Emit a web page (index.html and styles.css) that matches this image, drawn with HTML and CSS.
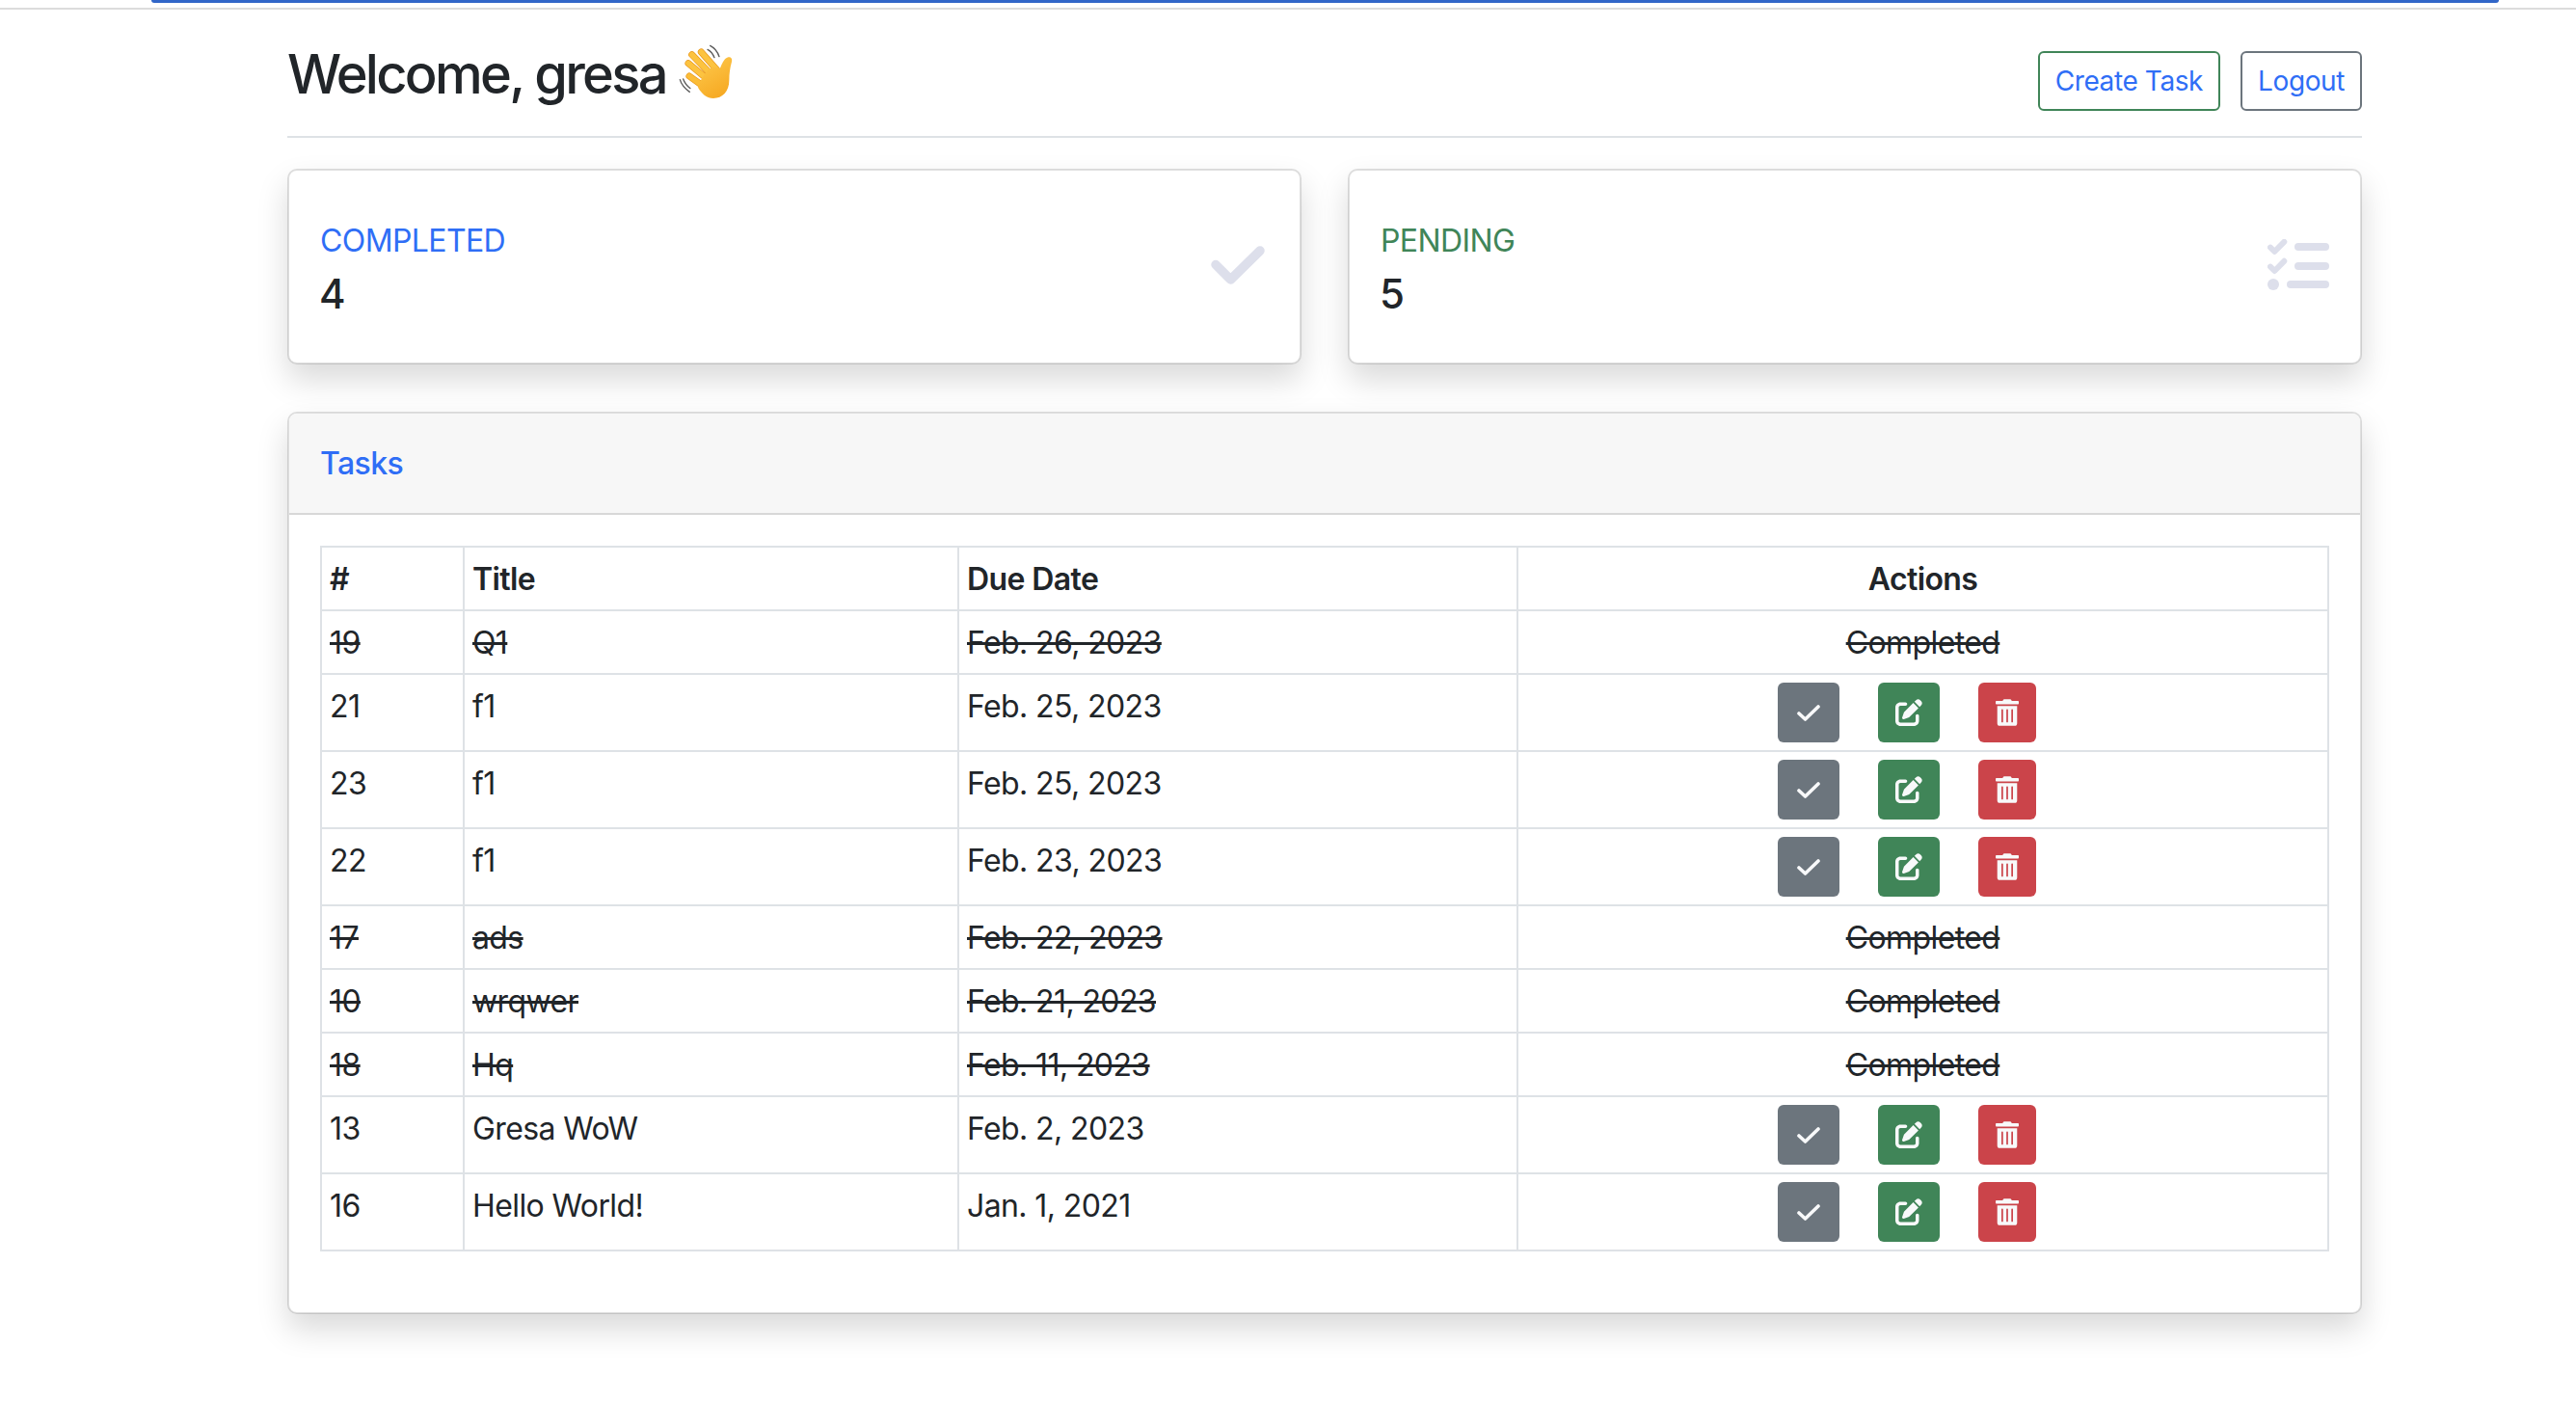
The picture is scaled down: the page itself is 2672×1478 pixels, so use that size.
FILE: index.html
```html
<!DOCTYPE html>
<html lang="en">
<head>
<meta charset="utf-8">
<title>Tasks</title>
<link rel="stylesheet" href="styles.css">
</head>
<body>
<div class="strip"><div class="strip-bar"></div></div>
<div class="page">
  <header class="top">
    <h1 class="welcome">Welcome, gresa
      <svg class="wave" viewBox="0 0 225 210" aria-hidden="true">
        <defs>
          <linearGradient id="hand" x1="0.2" y1="0" x2="0.7" y2="1">
            <stop offset="0" stop-color="#fdc84b"/>
            <stop offset="1" stop-color="#f6a821"/>
          </linearGradient>
        </defs>
        <g fill="none" stroke="#5a5a5a" stroke-width="4" stroke-linecap="round">
          <path d="M122 22c12 6 22 16 28 34"/>
          <path d="M114 34c9 5 16 12 21 25"/>
          <path d="M28 128c4 14 13 26 30 38"/>
          <path d="M38 126c4 11 10 20 22 29"/>
        </g>
        <g fill="none" stroke-linecap="round">
          <path d="M65 50L125 112" stroke="#e8961a" stroke-width="21"/>
          <path d="M65 50L125 112" stroke="#fcc340" stroke-width="17"/>
          <path d="M94 42L145 100" stroke="#e8961a" stroke-width="21"/>
          <path d="M94 42L145 100" stroke="#fcc340" stroke-width="17"/>
          <path d="M54 77L115 128" stroke="#e8961a" stroke-width="21"/>
          <path d="M54 77L115 128" stroke="#fcc340" stroke-width="17"/>
          <path d="M57 117L110 155" stroke="#e8961a" stroke-width="21"/>
          <path d="M57 117L110 155" stroke="#fbbd38" stroke-width="17"/>
        </g>
        <path fill="url(#hand)" d="M118 95C135 82 147 92 152 94C158 82 164 62 178 58C188 56 191 64 189 72C184 90 181 108 181 130C181 165 160 186 132 186C112 186 96 172 84 152C92 128 104 108 118 95Z"/>
      </svg>
    </h1>
    <nav class="top-actions">
      <a class="btn btn-create" href="#">Create Task</a>
      <a class="btn btn-logout" href="#">Logout</a>
    </nav>
  </header>

  <section class="stats">
    <article class="card stat">
      <div class="stat-text">
        <div class="stat-label blue">COMPLETED</div>
        <div class="stat-num">4</div>
      </div>
      <svg class="stat-check" viewBox="0 0 56 40" aria-hidden="true"><polyline points="5,19.5 20.5,35 51,5"/></svg>
    </article>
    <article class="card stat">
      <div class="stat-text">
        <div class="stat-label green">PENDING</div>
        <div class="stat-num">5</div>
      </div>
      <svg class="stat-tasks" viewBox="0 0 64 53" aria-hidden="true">
        <polyline points="3,8.7 7.3,13 17.3,2.8"/>
        <polyline points="3,28.7 7.3,33 17.3,22.8"/>
        <circle cx="6" cy="47" r="6"/>
        <line class="bar" x1="32" y1="8" x2="60" y2="8"/>
        <line class="bar" x1="32" y1="28" x2="60" y2="28"/>
        <line class="bar" x1="24" y1="47" x2="60" y2="47"/>
      </svg>
    </article>
  </section>

  <section class="card tasks">
    <div class="tasks-head">Tasks</div>
    <div class="tasks-body">
      <table class="grid">
        <colgroup>
          <col class="c-id"><col class="c-title"><col class="c-date"><col class="c-act">
        </colgroup>
        <thead>
          <tr><th>#</th><th>Title</th><th>Due Date</th><th class="center">Actions</th></tr>
        </thead>
        <tbody>
          <tr class="done"><td>19</td><td>Q1</td><td>Feb. 26, 2023</td><td class="center">Completed</td></tr>
          <tr><td>21</td><td>f1</td><td>Feb. 25, 2023</td><td class="act-cell"><div class="acts">
            <a class="act a-gray" href="#"><svg class="i-check" viewBox="0 0 24 17"><polyline points="2,9 8.5,15 22,2"/></svg></a>
            <a class="act a-green" href="#"><svg class="i-edit" viewBox="0 0 512 512"><path d="M471.6 21.7c-21.9-21.9-57.3-21.9-79.2 0L362.3 51.7l97.9 97.9 30.1-30.1c21.9-21.9 21.9-57.3 0-79.2L471.6 21.7zm-299.2 220c-6.1 6.1-10.8 13.6-13.5 21.9l-29.6 88.8c-2.9 8.6-.6 18.1 5.8 24.6s15.9 8.7 24.6 5.8l88.8-29.6c8.2-2.7 15.7-7.4 21.9-13.5L437.7 172.3 339.7 74.3 172.4 241.7zM96 64C43 64 0 107 0 160V416c0 53 43 96 96 96H352c53 0 96-43 96-96V320c0-17.7-14.3-32-32-32s-32 14.3-32 32v96c0 17.7-14.3 32-32 32H96c-17.7 0-32-14.3-32-32V160c0-17.7 14.3-32 32-32h96c17.7 0 32-14.3 32-32s-14.3-32-32-32H96z"/></svg></a>
            <a class="act a-red" href="#"><svg class="i-trash" viewBox="0 0 448 512"><path d="M32 464a48 48 0 0 0 48 48h288a48 48 0 0 0 48-48V128H32zm272-256a16 16 0 0 1 32 0v224a16 16 0 0 1-32 0zm-96 0a16 16 0 0 1 32 0v224a16 16 0 0 1-32 0zm-96 0a16 16 0 0 1 32 0v224a16 16 0 0 1-32 0zM432 32H312l-9.4-18.7A24 24 0 0 0 281.1 0H166.8a23.72 23.72 0 0 0-21.4 13.3L136 32H16A16 16 0 0 0 0 48v32a16 16 0 0 0 16 16h416a16 16 0 0 0 16-16V48a16 16 0 0 0-16-16z"/></svg></a>
          </div></td></tr>
          <tr><td>23</td><td>f1</td><td>Feb. 25, 2023</td><td class="act-cell"><div class="acts">
            <a class="act a-gray" href="#"><svg class="i-check" viewBox="0 0 24 17"><polyline points="2,9 8.5,15 22,2"/></svg></a>
            <a class="act a-green" href="#"><svg class="i-edit" viewBox="0 0 512 512"><path d="M471.6 21.7c-21.9-21.9-57.3-21.9-79.2 0L362.3 51.7l97.9 97.9 30.1-30.1c21.9-21.9 21.9-57.3 0-79.2L471.6 21.7zm-299.2 220c-6.1 6.1-10.8 13.6-13.5 21.9l-29.6 88.8c-2.9 8.6-.6 18.1 5.8 24.6s15.9 8.7 24.6 5.8l88.8-29.6c8.2-2.7 15.7-7.4 21.9-13.5L437.7 172.3 339.7 74.3 172.4 241.7zM96 64C43 64 0 107 0 160V416c0 53 43 96 96 96H352c53 0 96-43 96-96V320c0-17.7-14.3-32-32-32s-32 14.3-32 32v96c0 17.7-14.3 32-32 32H96c-17.7 0-32-14.3-32-32V160c0-17.7 14.3-32 32-32h96c17.7 0 32-14.3 32-32s-14.3-32-32-32H96z"/></svg></a>
            <a class="act a-red" href="#"><svg class="i-trash" viewBox="0 0 448 512"><path d="M32 464a48 48 0 0 0 48 48h288a48 48 0 0 0 48-48V128H32zm272-256a16 16 0 0 1 32 0v224a16 16 0 0 1-32 0zm-96 0a16 16 0 0 1 32 0v224a16 16 0 0 1-32 0zm-96 0a16 16 0 0 1 32 0v224a16 16 0 0 1-32 0zM432 32H312l-9.4-18.7A24 24 0 0 0 281.1 0H166.8a23.72 23.72 0 0 0-21.4 13.3L136 32H16A16 16 0 0 0 0 48v32a16 16 0 0 0 16 16h416a16 16 0 0 0 16-16V48a16 16 0 0 0-16-16z"/></svg></a>
          </div></td></tr>
          <tr><td>22</td><td>f1</td><td>Feb. 23, 2023</td><td class="act-cell"><div class="acts">
            <a class="act a-gray" href="#"><svg class="i-check" viewBox="0 0 24 17"><polyline points="2,9 8.5,15 22,2"/></svg></a>
            <a class="act a-green" href="#"><svg class="i-edit" viewBox="0 0 512 512"><path d="M471.6 21.7c-21.9-21.9-57.3-21.9-79.2 0L362.3 51.7l97.9 97.9 30.1-30.1c21.9-21.9 21.9-57.3 0-79.2L471.6 21.7zm-299.2 220c-6.1 6.1-10.8 13.6-13.5 21.9l-29.6 88.8c-2.9 8.6-.6 18.1 5.8 24.6s15.9 8.7 24.6 5.8l88.8-29.6c8.2-2.7 15.7-7.4 21.9-13.5L437.7 172.3 339.7 74.3 172.4 241.7zM96 64C43 64 0 107 0 160V416c0 53 43 96 96 96H352c53 0 96-43 96-96V320c0-17.7-14.3-32-32-32s-32 14.3-32 32v96c0 17.7-14.3 32-32 32H96c-17.7 0-32-14.3-32-32V160c0-17.7 14.3-32 32-32h96c17.7 0 32-14.3 32-32s-14.3-32-32-32H96z"/></svg></a>
            <a class="act a-red" href="#"><svg class="i-trash" viewBox="0 0 448 512"><path d="M32 464a48 48 0 0 0 48 48h288a48 48 0 0 0 48-48V128H32zm272-256a16 16 0 0 1 32 0v224a16 16 0 0 1-32 0zm-96 0a16 16 0 0 1 32 0v224a16 16 0 0 1-32 0zm-96 0a16 16 0 0 1 32 0v224a16 16 0 0 1-32 0zM432 32H312l-9.4-18.7A24 24 0 0 0 281.1 0H166.8a23.72 23.72 0 0 0-21.4 13.3L136 32H16A16 16 0 0 0 0 48v32a16 16 0 0 0 16 16h416a16 16 0 0 0 16-16V48a16 16 0 0 0-16-16z"/></svg></a>
          </div></td></tr>
          <tr class="done"><td>17</td><td>ads</td><td>Feb. 22, 2023</td><td class="center">Completed</td></tr>
          <tr class="done"><td>10</td><td>wrqwer</td><td>Feb. 21, 2023</td><td class="center">Completed</td></tr>
          <tr class="done"><td>18</td><td>Hq</td><td>Feb. 11, 2023</td><td class="center">Completed</td></tr>
          <tr><td>13</td><td>Gresa WoW</td><td>Feb. 2, 2023</td><td class="act-cell"><div class="acts">
            <a class="act a-gray" href="#"><svg class="i-check" viewBox="0 0 24 17"><polyline points="2,9 8.5,15 22,2"/></svg></a>
            <a class="act a-green" href="#"><svg class="i-edit" viewBox="0 0 512 512"><path d="M471.6 21.7c-21.9-21.9-57.3-21.9-79.2 0L362.3 51.7l97.9 97.9 30.1-30.1c21.9-21.9 21.9-57.3 0-79.2L471.6 21.7zm-299.2 220c-6.1 6.1-10.8 13.6-13.5 21.9l-29.6 88.8c-2.9 8.6-.6 18.1 5.8 24.6s15.9 8.7 24.6 5.8l88.8-29.6c8.2-2.7 15.7-7.4 21.9-13.5L437.7 172.3 339.7 74.3 172.4 241.7zM96 64C43 64 0 107 0 160V416c0 53 43 96 96 96H352c53 0 96-43 96-96V320c0-17.7-14.3-32-32-32s-32 14.3-32 32v96c0 17.7-14.3 32-32 32H96c-17.7 0-32-14.3-32-32V160c0-17.7 14.3-32 32-32h96c17.7 0 32-14.3 32-32s-14.3-32-32-32H96z"/></svg></a>
            <a class="act a-red" href="#"><svg class="i-trash" viewBox="0 0 448 512"><path d="M32 464a48 48 0 0 0 48 48h288a48 48 0 0 0 48-48V128H32zm272-256a16 16 0 0 1 32 0v224a16 16 0 0 1-32 0zm-96 0a16 16 0 0 1 32 0v224a16 16 0 0 1-32 0zm-96 0a16 16 0 0 1 32 0v224a16 16 0 0 1-32 0zM432 32H312l-9.4-18.7A24 24 0 0 0 281.1 0H166.8a23.72 23.72 0 0 0-21.4 13.3L136 32H16A16 16 0 0 0 0 48v32a16 16 0 0 0 16 16h416a16 16 0 0 0 16-16V48a16 16 0 0 0-16-16z"/></svg></a>
          </div></td></tr>
          <tr><td>16</td><td>Hello World!</td><td>Jan. 1, 2021</td><td class="act-cell"><div class="acts">
            <a class="act a-gray" href="#"><svg class="i-check" viewBox="0 0 24 17"><polyline points="2,9 8.5,15 22,2"/></svg></a>
            <a class="act a-green" href="#"><svg class="i-edit" viewBox="0 0 512 512"><path d="M471.6 21.7c-21.9-21.9-57.3-21.9-79.2 0L362.3 51.7l97.9 97.9 30.1-30.1c21.9-21.9 21.9-57.3 0-79.2L471.6 21.7zm-299.2 220c-6.1 6.1-10.8 13.6-13.5 21.9l-29.6 88.8c-2.9 8.6-.6 18.1 5.8 24.6s15.9 8.7 24.6 5.8l88.8-29.6c8.2-2.7 15.7-7.4 21.9-13.5L437.7 172.3 339.7 74.3 172.4 241.7zM96 64C43 64 0 107 0 160V416c0 53 43 96 96 96H352c53 0 96-43 96-96V320c0-17.7-14.3-32-32-32s-32 14.3-32 32v96c0 17.7-14.3 32-32 32H96c-17.7 0-32-14.3-32-32V160c0-17.7 14.3-32 32-32h96c17.7 0 32-14.3 32-32s-14.3-32-32-32H96z"/></svg></a>
            <a class="act a-red" href="#"><svg class="i-trash" viewBox="0 0 448 512"><path d="M32 464a48 48 0 0 0 48 48h288a48 48 0 0 0 48-48V128H32zm272-256a16 16 0 0 1 32 0v224a16 16 0 0 1-32 0zm-96 0a16 16 0 0 1 32 0v224a16 16 0 0 1-32 0zm-96 0a16 16 0 0 1 32 0v224a16 16 0 0 1-32 0zM432 32H312l-9.4-18.7A24 24 0 0 0 281.1 0H166.8a23.72 23.72 0 0 0-21.4 13.3L136 32H16A16 16 0 0 0 0 48v32a16 16 0 0 0 16 16h416a16 16 0 0 0 16-16V48a16 16 0 0 0-16-16z"/></svg></a>
          </div></td></tr>
        </tbody>
      </table>
    </div>
  </section>
</div>
</body>
</html>
```

FILE: styles.css
```css
* { box-sizing: border-box; }
html, body { margin: 0; padding: 0; background: #fff; }
body {
  font-family: Inter, "Liberation Sans", sans-serif;
  font-size: 32px;
  line-height: 48px;
  letter-spacing: -0.6px;
  color: #212529;
  height: 1478px;
  overflow: hidden;
}

.strip { height: 10px; border-bottom: 2px solid #dcdcdc; padding: 0 80px 0 157px; }
.strip-bar { height: 3px; background: #3166c8; border-radius: 0 0 8px 8px; }

.page { width: 2152px; margin-left: 298px; }

.top {
  height: 133px;
  display: flex;
  justify-content: space-between;
  border-bottom: 2px solid #dee2e6;
}
.welcome {
  margin: 34px 0 0;
  font-size: 56px;
  line-height: 67px;
  font-weight: 500;
  letter-spacing: -2.7px;
  display: flex;
  align-items: flex-start;
  gap: 5px;
}
.wave { width: 75px; height: 70px; display: block; margin-top: -4px; }

.top-actions { display: flex; gap: 21px; margin-top: 43px; align-items: flex-start; }
.btn {
  display: block;
  height: 62px;
  padding: 0 16px;
  border-radius: 6px;
  border: 2px solid;
  font-size: 28px;
  line-height: 59px;
  letter-spacing: -0.4px;
  color: #2f6ef6;
  text-decoration: none;
}
.btn-create { border-color: #408558; }
.btn-logout { border-color: #6c757d; }

.card {
  background: #fff;
  border: 2px solid rgba(0, 0, 0, 0.125);
  border-radius: 10px;
  box-shadow: 0 16px 32px rgba(0, 0, 0, 0.15);
  background-clip: padding-box;
}

.stats {
  display: grid;
  grid-template-columns: 1052px 1052px;
  gap: 48px;
  margin-top: 32px;
}
.stat {
  height: 203px;
  padding: 0 32px;
  display: flex;
  align-items: center;
  justify-content: space-between;
}
.stat-text { padding-top: 8px; }
.stat-label { font-size: 32px; line-height: 48px; }
.stat-num { font-size: 42px; line-height: 62px; font-weight: 500; letter-spacing: 0; margin-left: -1px; }
.blue { color: #2f6ef6; }
.green { color: #408558; }

.stat-check { width: 56px; height: 40px; margin: -3px 4px 0 0; }
.stat-check polyline { fill: none; stroke: #dddfeb; stroke-width: 9.5; stroke-linecap: round; stroke-linejoin: round; }
.stat-tasks { width: 64px; height: 53px; margin-top: -4px; }
.stat-tasks polyline { fill: none; stroke: #dddfeb; stroke-width: 6; stroke-linecap: round; stroke-linejoin: round; }
.stat-tasks circle { fill: #dddfeb; }
.stat-tasks .bar { stroke: #dddfeb; stroke-width: 8; stroke-linecap: round; }

.tasks { margin-top: 49px; height: 936px; }
.tasks-head {
  height: 105px;
  padding: 28px 32px 0;
  background: #f7f7f7;
  border-bottom: 2px solid rgba(0, 0, 0, 0.125);
  color: #2f6ef6;
  font-weight: 500;
  border-radius: 8px 8px 0 0;
}
.tasks-body { padding: 32px 32px 0; }

.grid {
  width: 2082px;
  table-layout: fixed;
  border-collapse: collapse;
  border: 2px solid #dee2e6;
}
.c-id { width: 148px; }
.c-title { width: 513px; }
.c-date { width: 580px; }
.c-act { width: 841px; }
.grid th, .grid td {
  border: 2px solid #dee2e6;
  padding: 9px 8px 7px;
  text-align: left;
  vertical-align: top;
  line-height: 48px;
}
.grid .act-cell { padding: 8px; }
.grid th { font-weight: 600; }
.grid .center { text-align: center; }
.done td { text-decoration: line-through; }

.acts { display: flex; justify-content: center; gap: 40px; padding-right: 33px; }
.act {
  height: 62px;
  display: flex;
  align-items: center;
  justify-content: center;
  border-radius: 6px;
}
.a-gray { width: 64px; background: #6c757d; }
.a-green { width: 64px; background: #408558; }
.a-red { width: 60px; background: #cb444a; }
.i-check { width: 24px; height: 17px; }
.i-check polyline { fill: none; stroke: #f8f9fa; stroke-width: 3.6; stroke-linecap: round; stroke-linejoin: round; }
.i-edit { width: 28px; height: 28px; fill: #f8f9fa; }
.i-trash { width: 24px; height: 28px; fill: #f8f9fa; }
```
